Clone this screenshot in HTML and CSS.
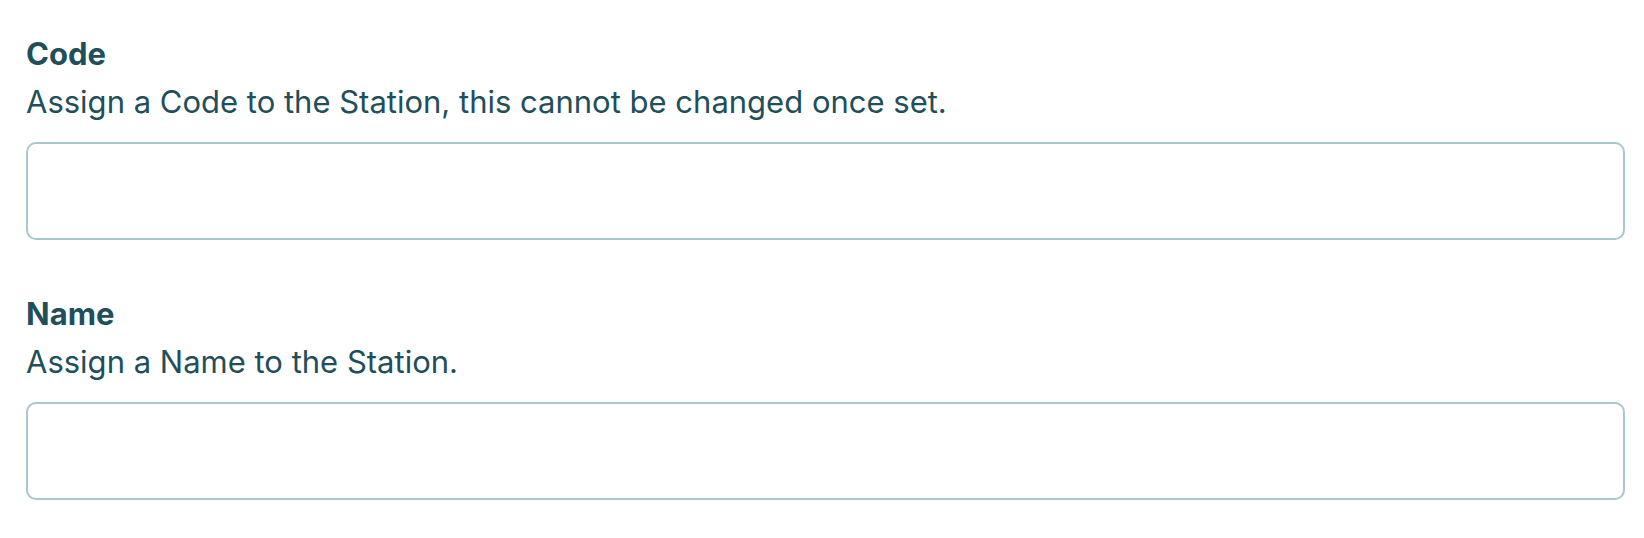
FILE: index.html
```html
<!DOCTYPE html>
<html>
<head>
<meta charset="utf-8">
<link rel="stylesheet" href="styles.css">
</head>
<body>
<form class="form">
  <div class="field">
    <label class="label" for="code">Code</label>
    <p class="help">Assign a Code to the Station, this cannot be changed once set.</p>
    <input class="input" id="code" type="text">
  </div>
  <div class="field">
    <label class="label" for="name">Name</label>
    <p class="help">Assign a Name to the Station.</p>
    <input class="input" id="name" type="text">
  </div>
</form>
</body>
</html>
```
FILE: styles.css
```css
html, body {
  margin: 0;
  padding: 0;
  background: #ffffff;
}
.form {
  padding: 30px 19px 0 26px;
  display: flex;
  flex-direction: column;
  gap: 50px;
  font-family: "Inter", "Noto Sans", sans-serif;
  color: #1f4f5a;
}
.field {
  display: flex;
  flex-direction: column;
}
.label {
  font-size: 31px;
  line-height: 48px;
  font-weight: 700;
}
.help {
  margin: 0;
  font-size: 31px;
  line-height: 48px;
  font-weight: 400;
}
.input {
  margin-top: 16px;
  box-sizing: border-box;
  height: 98px;
  width: 100%;
  border: 2px solid #a9c7cc;
  border-radius: 10px;
  background: #fff;
  outline: none;
  font: inherit;
}
```
